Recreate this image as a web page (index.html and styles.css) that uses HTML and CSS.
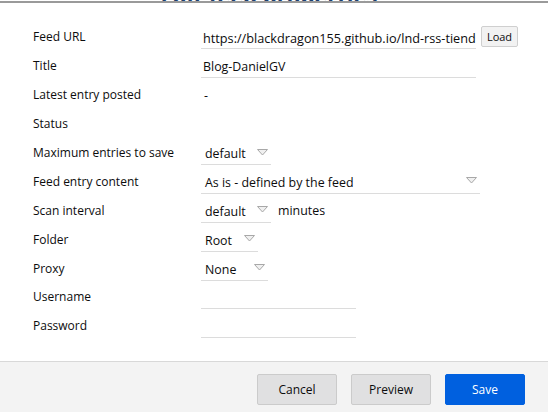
FILE: index.html
```html
<!DOCTYPE html>
<html>
<head>
<meta charset="utf-8">
<link rel="stylesheet" href="styles.css">
</head>
<body>
<div class="page">
  <div class="titlebar"><div class="title">Edit feed properties</div></div>
  <div class="form">
    <div class="label">Feed URL</div>
    <div class="field"><div class="input w-url url">https://blackdragon155.github.io/lnd-rss-tiend</div><button class="load">Load</button></div>
    <div class="label">Title</div>
    <div class="field"><div class="input w-url">Blog-DanielGV</div></div>
    <div class="label">Latest entry posted</div>
    <div class="field"><span class="plain">-</span></div>
    <div class="label">Status</div>
    <div class="field"></div>
    <div class="label">Maximum entries to save</div>
    <div class="field"><div class="select w-70"><span>default</span><svg class="arrow" width="11" height="7" viewBox="0 0 11 7"><polygon points="0.5,0.5 10.5,0.5 5.5,6" fill="#f0f0f0" stroke="#a8a8a8" stroke-width="1"/></svg></div></div>
    <div class="label">Feed entry content</div>
    <div class="field"><div class="select w-279"><span>As is - defined by the feed</span><svg class="arrow" width="11" height="7" viewBox="0 0 11 7"><polygon points="0.5,0.5 10.5,0.5 5.5,6" fill="#f0f0f0" stroke="#a8a8a8" stroke-width="1"/></svg></div></div>
    <div class="label">Scan interval</div>
    <div class="field"><div class="select w-70"><span>default</span><svg class="arrow" width="11" height="7" viewBox="0 0 11 7"><polygon points="0.5,0.5 10.5,0.5 5.5,6" fill="#f0f0f0" stroke="#a8a8a8" stroke-width="1"/></svg></div><span class="unit">minutes</span></div>
    <div class="label">Folder</div>
    <div class="field"><div class="select w-57"><span>Root</span><svg class="arrow" width="11" height="7" viewBox="0 0 11 7"><polygon points="0.5,0.5 10.5,0.5 5.5,6" fill="#f0f0f0" stroke="#a8a8a8" stroke-width="1"/></svg></div></div>
    <div class="label">Proxy</div>
    <div class="field"><div class="select w-67"><span>None</span><svg class="arrow" width="11" height="7" viewBox="0 0 11 7"><polygon points="0.5,0.5 10.5,0.5 5.5,6" fill="#f0f0f0" stroke="#a8a8a8" stroke-width="1"/></svg></div></div>
    <div class="label">Username</div>
    <div class="field"><div class="input w-155"></div></div>
    <div class="label">Password</div>
    <div class="field"><div class="input w-155"></div></div>
  </div>
  <div class="footer">
    <button class="btn">Cancel</button>
    <button class="btn">Preview</button>
    <button class="btn primary">Save</button>
  </div>
</div>
</body>
</html>
```
FILE: styles.css
```css
html, body {
  margin: 0;
  padding: 0;
  background: #fff;
}
body {
  font-family: "Open Sans", "Noto Sans", sans-serif;
  font-size: 12px;
  color: #0c0c0d;
  width: 548px;
  height: 412px;
  overflow: hidden;
}
.page {
  display: flex;
  flex-direction: column;
  height: 412px;
}
.titlebar {
  height: 1px;
  overflow: hidden;
  border-bottom: 2px solid #9a9a9a;
  display: flex;
  align-items: flex-end;
  justify-content: center;
}
.title {
  font-size: 22px;
  font-weight: 700;
  color: #1c3f6e;
  line-height: 22px;
  margin-bottom: -5px;
  padding-right: 10px;
}
.form {
  display: grid;
  grid-template-columns: 168px 1fr;
  grid-auto-rows: 28.9px;
  padding: 20px 0 0 33px;
  flex: 1;
  align-items: center;
}
.label {
  line-height: 16px;
}
.field {
  display: flex;
  align-items: center;
  height: 100%;
  font-size: 12.4px;
}
.input {
  height: 22px;
  line-height: 22px;
  border-bottom: 1px solid #dcdcdc;
  padding-left: 2px;
  white-space: nowrap;
  overflow: hidden;
  box-sizing: border-box;
  margin-top: 2px;
}
.url {
  font-size: 12.7px;
}
.w-url { width: 275px; }
.w-155 { width: 155px; }
.load {
  margin-left: 5px;
  margin-top: -2px;
  width: 37px;
  height: 21px;
  padding: 0;
  font-family: inherit;
  font-size: 11px;
  background: #f2f2f2;
  border: 1px solid #cfcfcf;
  border-radius: 2px;
  color: #0c0c0d;
}
.plain {
  padding-left: 3px;
}
.select {
  height: 22px;
  border-bottom: 1px solid #dcdcdc;
  display: flex;
  align-items: center;
  justify-content: space-between;
  padding: 0 3px 0 4px;
  box-sizing: border-box;
  margin-top: 2px;
}
.w-70 { width: 70px; }
.w-57 { width: 57px; }
.w-67 { width: 67px; }
.w-279 { width: 279px; }
.arrow {
  display: block;
  margin-top: -3px;
}
.unit {
  margin-left: 7px;
}
.footer {
  height: 51px;
  background: #f3f3f3;
  border-top: 1px solid #d8d8d8;
  display: flex;
  justify-content: flex-end;
  align-items: center;
  gap: 14px;
  padding: 4px 23px 0 0;
  box-sizing: border-box;
}
.btn {
  width: 80px;
  height: 31px;
  font-family: inherit;
  font-size: 12px;
  background: #e0e0e1;
  border: 1px solid #cbcbcb;
  border-radius: 2px;
  color: #0c0c0d;
  padding: 0;
}
.btn.primary {
  background: #0060df;
  border-color: #0060df;
  color: #fff;
}
```
